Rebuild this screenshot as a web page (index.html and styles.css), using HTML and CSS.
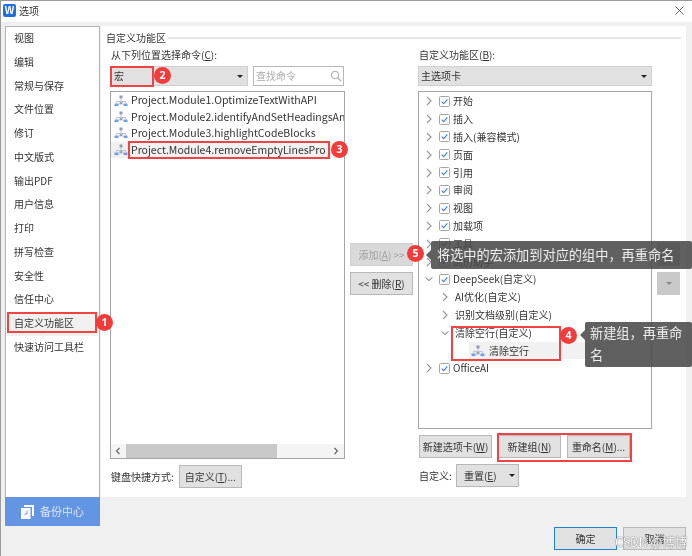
FILE: index.html
```html
<!DOCTYPE html>
<html lang="zh-CN">
<head>
<meta charset="utf-8">
<title>选项</title>
<link rel="stylesheet" href="styles.css">
</head>
<body>
<svg class="defs" width="0" height="0">
  <symbol id="macro" viewBox="0 0 14 12">
    <rect x="5.5" y="0.5" width="3" height="3" fill="#8f9bb0"/>
    <path d="M7 3.5V7M2.5 8V6.5H11.5V8" fill="none" stroke="#b9c3d2" stroke-width="1"/>
    <rect x="0.5" y="8.5" width="4" height="2.6" fill="#6ea0e6"/>
    <rect x="5.5" y="7" width="3" height="2.4" fill="#9aa5b8"/>
    <rect x="9.5" y="8.5" width="4" height="2.6" fill="#6ea0e6"/>
  </symbol>
  <symbol id="chk" viewBox="0 0 11 11">
    <rect x="0.5" y="0.5" width="10" height="10" rx="1" fill="#fff" stroke="#a6a6a6"/>
    <path d="M2.6 5.6L4.7 7.7L8.4 3.4" fill="none" stroke="#4a86d8" stroke-width="1.2"/>
  </symbol>
  <symbol id="right" viewBox="0 0 8 10"><path d="M2 1L6 5L2 9" fill="none" stroke="#9a9a9a" stroke-width="1.2"/></symbol>
  <symbol id="down" viewBox="0 0 10 8"><path d="M1 2L5 6L9 2" fill="none" stroke="#555" stroke-width="1.2"/></symbol>
</svg>

<div class="window">
  <header class="titlebar">
    <span class="applogo">W</span>
    <span class="title">选项</span>
    <svg class="close" width="9" height="9" viewBox="0 0 10 10"><path d="M0.5 0.5L9.5 9.5M9.5 0.5L0.5 9.5" stroke="#555" stroke-width="1" fill="none"/></svg>
  </header>

  <div class="main">
    <aside class="side">
      <nav class="nav">
        <div class="nav-item">视图</div>
        <div class="nav-item">编辑</div>
        <div class="nav-item">常规与保存</div>
        <div class="nav-item">文件位置</div>
        <div class="nav-item">修订</div>
        <div class="nav-item">中文版式</div>
        <div class="nav-item">输出PDF</div>
        <div class="nav-item">用户信息</div>
        <div class="nav-item">打印</div>
        <div class="nav-item">拼写检查</div>
        <div class="nav-item">安全性</div>
        <div class="nav-item">信任中心</div>
        <div class="nav-item nav-current">自定义功能区</div>
        <div class="nav-item">快速访问工具栏</div>
      </nav>
      <div class="backup">
        <svg width="13" height="14" viewBox="0 0 13 14"><path d="M3 0H13V11H11V2H3Z" fill="#fff"/><path d="M0 3H9.500V14H0Z" fill="#fff"/><path d="M6 5.500V9H3.500" fill="none" stroke="#6495e3"/></svg>
        <span>备份中心</span>
      </div>
    </aside>

    <section class="panel">
      <div class="legend"><span>自定义功能区</span><i class="legend-line"></i></div>
      <div class="columns">
        <div class="col col-left">
          <div class="label">从下列位置选择命令(<u>C</u>):</div>
          <div class="pick-row">
            <div class="combo combo-short"><span>宏</span><i class="caret"></i></div>
            <div class="search"><span>查找命令</span>
              <svg width="12" height="12" viewBox="0 0 12 12"><circle cx="5" cy="5" r="3.700" fill="none" stroke="#b5b5b5" stroke-width="1.200"/><path d="M8 8L11.200 11.200" stroke="#b5b5b5" stroke-width="1.500"/></svg>
            </div>
          </div>
          <div class="listbox">
            <div class="list-rows">
              <div class="list-row"><svg class="mi"><use href="#macro"/></svg>Project.Module1.OptimizeTextWithAPI</div>
              <div class="list-row"><svg class="mi"><use href="#macro"/></svg>Project.Module2.identifyAndSetHeadingsAn</div>
              <div class="list-row"><svg class="mi"><use href="#macro"/></svg>Project.Module3.highlightCodeBlocks</div>
              <div class="list-row list-sel"><svg class="mi"><use href="#macro"/></svg>Project.Module4.removeEmptyLinesPro</div>
            </div>
            <div class="hscroll">
              <svg width="6" height="8" viewBox="0 0 6 8"><path d="M4.500 1L1.500 4L4.500 7" fill="none" stroke="#666" stroke-width="1.200"/></svg>
              <div class="track"><div class="thumb"></div></div>
              <svg width="6" height="8" viewBox="0 0 6 8"><path d="M1.500 1L4.500 4L1.500 7" fill="none" stroke="#666" stroke-width="1.200"/></svg>
            </div>
          </div>
          <div class="foot-row">
            <span>键盘快捷方式:</span>
            <button class="btn btn-w">自定义(<u>T</u>)...</button>
          </div>
        </div>

        <div class="col-mid">
          <button class="btn btn-w btn-off">添加(<u>A</u>) &gt;&gt;</button>
          <button class="btn btn-w">&lt;&lt; 删除(<u>R</u>)</button>
        </div>

        <div class="col col-right">
          <div class="label">自定义功能区(<u>B</u>):</div>
          <div class="pick-row">
            <div class="combo combo-full"><span>主选项卡</span><i class="caret"></i></div>
          </div>
          <div class="tree">
            <div class="tree-row"><svg class="ar"><use href="#right"/></svg><svg class="ck"><use href="#chk"/></svg>开始</div>
            <div class="tree-row"><svg class="ar"><use href="#right"/></svg><svg class="ck"><use href="#chk"/></svg>插入</div>
            <div class="tree-row"><svg class="ar"><use href="#right"/></svg><svg class="ck"><use href="#chk"/></svg>插入(兼容模式)</div>
            <div class="tree-row"><svg class="ar"><use href="#right"/></svg><svg class="ck"><use href="#chk"/></svg>页面</div>
            <div class="tree-row"><svg class="ar"><use href="#right"/></svg><svg class="ck"><use href="#chk"/></svg>引用</div>
            <div class="tree-row"><svg class="ar"><use href="#right"/></svg><svg class="ck"><use href="#chk"/></svg>审阅</div>
            <div class="tree-row"><svg class="ar"><use href="#right"/></svg><svg class="ck"><use href="#chk"/></svg>视图</div>
            <div class="tree-row"><svg class="ar"><use href="#right"/></svg><svg class="ck"><use href="#chk"/></svg>加载项</div>
            <div class="tree-row"><svg class="ar"><use href="#right"/></svg><svg class="ck"><use href="#chk"/></svg>工具</div>
            <div class="tree-row"><svg class="ar"><use href="#right"/></svg><svg class="ck"><use href="#chk"/></svg>高历助手</div>
            <div class="tree-row"><svg class="ar"><use href="#down"/></svg><svg class="ck"><use href="#chk"/></svg>DeepSeek(自定义)</div>
            <div class="tree-row tree-l2"><svg class="ar"><use href="#right"/></svg>AI优化(自定义)</div>
            <div class="tree-row tree-l2"><svg class="ar"><use href="#right"/></svg>识别文档级别(自定义)</div>
            <div class="tree-row tree-l2"><svg class="ar"><use href="#down"/></svg>清除空行(自定义)</div>
            <div class="tree-row tree-l3"><svg class="mi"><use href="#macro"/></svg>清除空行</div>
            <div class="tree-row"><svg class="ar"><use href="#right"/></svg><svg class="ck"><use href="#chk"/></svg>OfficeAI</div>
          </div>
          <div class="btn-row">
            <button class="btn btn-tab">新建选项卡(<u>W</u>)</button>
            <button class="btn btn-w">新建组(<u>N</u>)</button>
            <button class="btn btn-w">重命名(<u>M</u>)...</button>
          </div>
          <div class="foot-row foot-reset">
            <span>自定义:</span>
            <button class="btn btn-w btn-split">重置(<u>E</u>)<i class="caret"></i></button>
          </div>
        </div>

        <div class="col-order">
          <div class="order-btn"></div>
          <div class="order-btn"><i class="caret caret-grey"></i></div>
        </div>
      </div>
    </section>
  </div>

  <footer class="actions">
    <button class="btn btn-act btn-primary">确定</button>
    <button class="btn btn-act">取消</button>
  </footer>
</div>

<div class="mark m1"></div>
<div class="mark m2"></div>
<div class="mark m3"></div>
<div class="mark m4"></div>
<div class="mark m5"></div>

<div class="tip tip-add">将选中的宏添加到对应的组中，再重命名</div>
<div class="tip tip-new">新建组，再重命名</div>

<div class="badge b1">1</div>
<div class="badge b2">2</div>
<div class="badge b3">3</div>
<div class="badge b4">4</div>
<div class="badge b5">5</div>

<div class="watermark">CSDN @博博</div>
</body>
</html>
```

FILE: styles.css
```css
* { box-sizing: border-box; }
html, body { margin: 0; padding: 0; }
body {
  width: 692px;
  height: 556px;
  overflow: hidden;
  position: relative;
  background: #f0f0f0;
  color: #333;
  font: 10px/1 "Noto Sans CJK SC", "Noto Sans", sans-serif;
  filter: blur(0.35px);
}
.defs { position: absolute; }
u { text-underline-offset: 1px; }

.window {
  width: 692px;
  height: 556px;
  display: flex;
  flex-direction: column;
  border-top: 1px solid #9b9b9b;
  border-left: 1px solid #9b9b9b;
  background: #f0f0f0;
}
.titlebar {
  height: 21px;
  flex: none;
  background: #fff;
  display: flex;
  align-items: center;
  padding: 0 8px 2px 2px;
}
.applogo {
  width: 13px;
  height: 13px;
  background: #1f6fe0;
  border-radius: 2px;
  color: #fff;
  font: 700 10px/13px "Liberation Sans", sans-serif;
  text-align: center;
}
.title { margin-left: 3px; }
.close { margin-left: auto; }

.main {
  display: flex;
  padding: 4px 6px 0 4px;
  flex: none;
}
.side { width: 95px; flex: none; margin-right: 1px; }
.nav {
  height: 471px;
  background: #fff;
  border: 1px solid #b4b4b4;
  border-width: 1px 1px 0 1px;
  padding: 0 1px;
}
.nav-item {
  height: 23.750px;
  line-height: 22.750px;
  padding-left: 7px;
}
.nav-current { background: #f0f0f0; }
.backup {
  height: 29px;
  background: #6495e3;
  color: #d8e4f8;
  display: flex;
  align-items: center;
  justify-content: center;
  gap: 6px;
  font-size: 11px;
}

.panel {
  flex: 1;
  height: 471px;
  background: #fff;
  padding: 5px 5px 0 5px;
}
.legend {
  display: flex;
  align-items: center;
  gap: 2px;
  height: 14px;
}
.legend-line { flex: 1; height: 2px; background: #e6e6e6; }

.columns { display: flex; margin-top: 2px; }
.col { display: flex; flex-direction: column; }
.col-left { width: 235px; margin-left: 4px; }
.col-right { width: 234px; margin-left: 5px; }
.label { height: 14px; line-height: 14px; margin-top: 1px; padding-left: 1px; }

.pick-row { display: flex; gap: 5px; margin-top: 4px; height: 20px; }
.combo {
  background: #e1e1e1;
  display: flex;
  align-items: center;
  justify-content: space-between;
  padding: 0 4px 0 2px;
  border: 1px solid #d0d0d0;
}
.combo-short { width: 137px; margin-left: 1px; }
.combo-full { width: 234px; }
.caret {
  width: 0;
  height: 0;
  border: 3px solid transparent;
  border-top: 3px solid #222;
  border-bottom: 0;
  display: inline-block;
}
.caret-grey { border-top-color: #888; }
.search {
  width: 91px;
  border: 1px solid #b8b8b8;
  display: flex;
  align-items: center;
  justify-content: space-between;
  padding: 0 1px 0 2px;
  color: #aaa;
}

.listbox {
  height: 368px;
  margin-top: 5px;
  border: 1px solid #a6a6a6;
  display: flex;
  flex-direction: column;
}
.list-rows { flex: 1; overflow: hidden; padding-top: 0.500px; }
.list-row {
  height: 16.400px;
  display: flex;
  align-items: center;
  gap: 3px;
  padding-left: 3px;
  white-space: nowrap;
  font-size: 10.500px;
}
.list-sel { background: #f1f1f1; }
.mi { width: 14px; height: 12px; flex: none; }
.hscroll {
  height: 14px;
  display: flex;
  align-items: center;
  padding: 0 5px 0 4px;
  background: #f4f4f4;
}
.track { flex: 1; height: 14px; padding: 0 0 0 1px; margin: 0 4px; }
.thumb { width: 151px; height: 14px; background: #c8c8c8; }

.foot-row { display: flex; align-items: center; gap: 5px; margin-top: 6px; padding-left: 1px; }
.btn {
  font: inherit;
  color: #333;
  height: 23px;
  padding: 0;
  background: #e1e1e1;
  border: 1px solid #b8b8b8;
  white-space: nowrap;
  flex: none;
}
.btn-w { width: 63px; }
.btn-off { color: #a0a0a0; background: #d9d9d9; border-color: #d0d0d0; }
.btn-tab { width: 73px; }

.col-mid {
  width: 63px;
  margin-left: 5px;
  padding-top: 196px;
  display: flex;
  flex-direction: column;
  gap: 6px;
}
.tree {
  height: 338px;
  margin-top: 5px;
  border: 1px solid #a6a6a6;
  padding-top: 0.500px;
}
.tree-row {
  height: 17.800px;
  display: flex;
  align-items: center;
  padding-left: 6px;
  white-space: nowrap;
}
.ar { width: 8px; height: 10px; flex: none; margin-right: 6px; }
.ck { width: 11px; height: 11px; flex: none; margin-right: 3px; }
.tree-l2 { padding-left: 22px; }
.tree-l3 { padding-left: 52px; background: linear-gradient(#f1f1f1, #f1f1f1) 50px 0 / 181px 100% no-repeat; }
.tree-l3 .mi { margin-right: 4px; }

.btn-row { display: flex; gap: 6px; margin-top: 6px; padding-left: 1px; }
.foot-reset { gap: 4px; }
.btn-split { position: relative; padding-right: 14px; }
.btn-split .caret { position: absolute; right: 3px; top: 9px; }

.col-order {
  width: 23px;
  margin-left: 5px;
  padding-top: 196px;
  display: flex;
  flex-direction: column;
  gap: 6px;
}
.order-btn {
  height: 23px;
  background: #c9c9c9;
  display: flex;
  align-items: center;
  justify-content: center;
}

.actions {
  flex: 1;
  display: flex;
  justify-content: flex-end;
  gap: 6px;
  padding: 1px 6px 0 0;
}
.btn-act { width: 63px; height: 23px; }
.btn-primary { border: 1px solid #1e82d6; }

.mark { position: absolute; border: 2px solid #f04444; }
.m1 { left: 7px; top: 312px; width: 90px; height: 21px; }
.m2 { left: 110px; top: 66px; width: 44px; height: 21px; }
.m3 { left: 128px; top: 141px; width: 202px; height: 18px; }
.m4 { left: 451px; top: 326px; width: 110px; height: 35px; }
.m5 { left: 497px; top: 433px; width: 135px; height: 29px; }

.tip {
  position: absolute;
  background: rgba(72, 72, 72, 0.87);
  color: #eee;
  font-size: 13.200px;
  border-radius: 2px;
}
.tip::before {
  content: "";
  position: absolute;
  left: -5px;
  border: 5px solid transparent;
  border-left: 0;
  border-right: 5px solid rgba(72, 72, 72, 0.87);
}
.tip-add { left: 431px; top: 241px; width: 261px; height: 28px; line-height: 28px; padding-left: 6px; }
.tip-add::before { top: 9px; }
.tip-new { left: 585px; top: 322px; width: 107px; height: 45px; line-height: 22px; padding: 0 4px 0 5px; }
.tip-new::before { top: 8px; }

.badge {
  position: absolute;
  width: 17px;
  height: 17px;
  border-radius: 50%;
  background: #f23b3b;
  color: #fff;
  font: 700 10.500px/17px "Noto Sans", sans-serif;
  text-align: center;
}
.b1 { left: 96px; top: 314px; }
.b2 { left: 154px; top: 67px; }
.b3 { left: 331px; top: 141px; }
.b4 { left: 560px; top: 327px; }
.b5 { left: 407px; top: 245px; }

.watermark {
  position: absolute;
  left: 615px;
  top: 535px;
  font-size: 12.500px;
  line-height: 14px;
  color: #fff;
  text-shadow: 0 0 1px #666, 0 0 1px #666;
  white-space: nowrap;
}
```
